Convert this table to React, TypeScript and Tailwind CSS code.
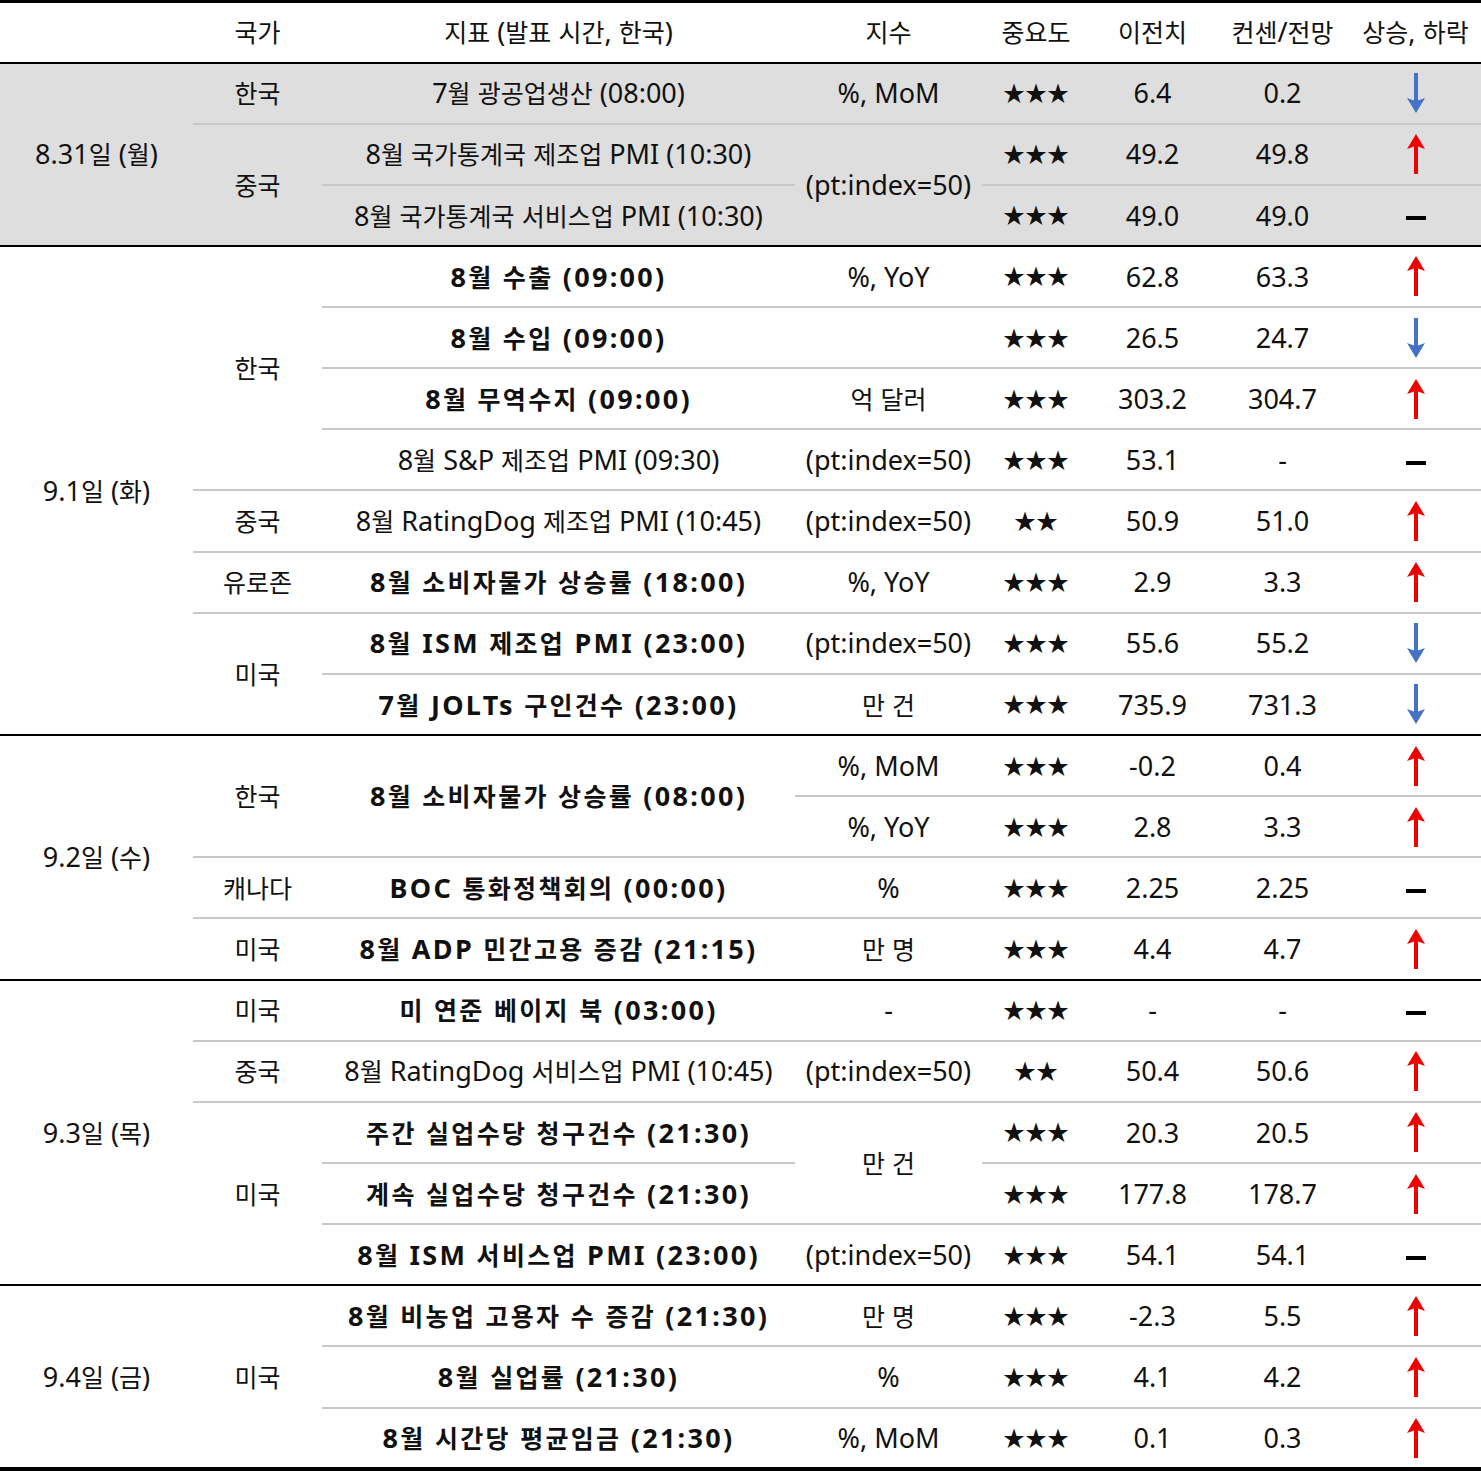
import type { ReactNode } from "react";

type Trend = "up" | "down" | "flat";

type Row = {
  first?: boolean;
  date?: [string, number];
  country?: [string, number];
  ind?: [string, number, boolean];
  idx?: [string, number];
  stars: number;
  prev: string;
  cons: string;
  trend: Trend;
};

type Group = { shaded?: boolean; rows: Row[] };

const groups: Group[] = [
  {
    shaded: true,
    rows: [
      { first: true, date: ["8.31일 (월)", 3], country: ["한국", 1], ind: ["7월 광공업생산 (08:00)", 1, false], idx: ["%, MoM", 1], stars: 3, prev: "6.4", cons: "0.2", trend: "down" },
      { country: ["중국", 2], ind: ["8월 국가통계국 제조업 PMI (10:30)", 1, false], idx: ["(pt:index=50)", 2], stars: 3, prev: "49.2", cons: "49.8", trend: "up" },
      { ind: ["8월 국가통계국 서비스업 PMI (10:30)", 1, false], stars: 3, prev: "49.0", cons: "49.0", trend: "flat" },
    ],
  },
  {
    rows: [
      { first: true, date: ["9.1일 (화)", 8], country: ["한국", 4], ind: ["8월 수출 (09:00)", 1, true], idx: ["%, YoY", 1], stars: 3, prev: "62.8", cons: "63.3", trend: "up" },
      { ind: ["8월 수입 (09:00)", 1, true], idx: ["", 1], stars: 3, prev: "26.5", cons: "24.7", trend: "down" },
      { ind: ["8월 무역수지 (09:00)", 1, true], idx: ["억 달러", 1], stars: 3, prev: "303.2", cons: "304.7", trend: "up" },
      { ind: ["8월 S&P 제조업 PMI (09:30)", 1, false], idx: ["(pt:index=50)", 1], stars: 3, prev: "53.1", cons: "-", trend: "flat" },
      { country: ["중국", 1], ind: ["8월 RatingDog 제조업 PMI (10:45)", 1, false], idx: ["(pt:index=50)", 1], stars: 2, prev: "50.9", cons: "51.0", trend: "up" },
      { country: ["유로존", 1], ind: ["8월 소비자물가 상승률 (18:00)", 1, true], idx: ["%, YoY", 1], stars: 3, prev: "2.9", cons: "3.3", trend: "up" },
      { country: ["미국", 2], ind: ["8월 ISM 제조업 PMI (23:00)", 1, true], idx: ["(pt:index=50)", 1], stars: 3, prev: "55.6", cons: "55.2", trend: "down" },
      { ind: ["7월 JOLTs 구인건수 (23:00)", 1, true], idx: ["만 건", 1], stars: 3, prev: "735.9", cons: "731.3", trend: "down" },
    ],
  },
  {
    rows: [
      { first: true, date: ["9.2일 (수)", 4], country: ["한국", 2], ind: ["8월 소비자물가 상승률 (08:00)", 2, true], idx: ["%, MoM", 1], stars: 3, prev: "-0.2", cons: "0.4", trend: "up" },
      { idx: ["%, YoY", 1], stars: 3, prev: "2.8", cons: "3.3", trend: "up" },
      { country: ["캐나다", 1], ind: ["BOC 통화정책회의 (00:00)", 1, true], idx: ["%", 1], stars: 3, prev: "2.25", cons: "2.25", trend: "flat" },
      { country: ["미국", 1], ind: ["8월 ADP 민간고용 증감 (21:15)", 1, true], idx: ["만 명", 1], stars: 3, prev: "4.4", cons: "4.7", trend: "up" },
    ],
  },
  {
    rows: [
      { first: true, date: ["9.3일 (목)", 5], country: ["미국", 1], ind: ["미 연준 베이지 북 (03:00)", 1, true], idx: ["-", 1], stars: 3, prev: "-", cons: "-", trend: "flat" },
      { country: ["중국", 1], ind: ["8월 RatingDog 서비스업 PMI (10:45)", 1, false], idx: ["(pt:index=50)", 1], stars: 2, prev: "50.4", cons: "50.6", trend: "up" },
      { country: ["미국", 3], ind: ["주간 실업수당 청구건수 (21:30)", 1, true], idx: ["만 건", 2], stars: 3, prev: "20.3", cons: "20.5", trend: "up" },
      { ind: ["계속 실업수당 청구건수 (21:30)", 1, true], stars: 3, prev: "177.8", cons: "178.7", trend: "up" },
      { ind: ["8월 ISM 서비스업 PMI (23:00)", 1, true], idx: ["(pt:index=50)", 1], stars: 3, prev: "54.1", cons: "54.1", trend: "flat" },
    ],
  },
  {
    rows: [
      { first: true, date: ["9.4일 (금)", 3], country: ["미국", 3], ind: ["8월 비농업 고용자 수 증감 (21:30)", 1, true], idx: ["만 명", 1], stars: 3, prev: "-2.3", cons: "5.5", trend: "up" },
      { ind: ["8월 실업률 (21:30)", 1, true], idx: ["%", 1], stars: 3, prev: "4.1", cons: "4.2", trend: "up" },
      { ind: ["8월 시간당 평균임금 (21:30)", 1, true], idx: ["%, MoM", 1], stars: 3, prev: "0.1", cons: "0.3", trend: "up" },
    ],
  },
];

// hangul runs are set a touch smaller than the latin/digit runs, like the source font
const HANGUL = /([\u1100-\u11ff\u3130-\u318f\uac00-\ud7af]+)/;

function K({ s }: { s: string }) {
  return (
    <>
      {s.split(HANGUL).map((part, i) =>
        part === "" ? null : HANGUL.test(part) ? (
          <span key={i} className="text-[25px]">
            {part}
          </span>
        ) : (
          <span key={i}>{part}</span>
        )
      )}
    </>
  );
}

function TrendMark({ t }: { t: Trend }) {
  if (t === "flat") return <span className="inline-block w-[20px] h-[4px] bg-black align-middle" />;
  if (t === "up")
    return (
      <svg width="18" height="40" viewBox="0 0 18 40" className="inline-block align-middle">
        <path d="M9 0 L18 15 L11 12.5 L11 40 L7 40 L7 12.5 L0 15 Z" fill="#f00000" />
      </svg>
    );
  return (
    <svg width="18" height="40" viewBox="0 0 18 40" className="inline-block align-middle">
      <path d="M9 40 L18 25 L11 27.5 L11 0 L7 0 L7 27.5 L0 25 Z" fill="#4472c4" />
    </svg>
  );
}

function Td({ first, span, className, children }: { first?: boolean; span?: number; className?: string; children?: ReactNode }) {
  return (
    <td
      rowSpan={span && span > 1 ? span : undefined}
      className={`p-0 text-center align-middle whitespace-nowrap leading-[1.1] border-t-2 ${first ? "border-t-black" : "border-t-[#c8c8c8]"} ${className ?? ""}`}
    >
      {children}
    </td>
  );
}

const heads = ["", "국가", "지표 (발표 시간, 한국)", "지수", "중요도", "이전치", "컨센/전망", "상승, 하락"];

export default function App() {
  return (
    <div className="w-[1481px] bg-white font-['Noto_Sans','Noto_Sans_CJK_KR',sans-serif] text-[27px] text-[#111]">
      <table className="w-[1481px] table-fixed border-collapse border-t-[3px] border-b-4 border-black">
        <colgroup>
          <col className="w-[193px]" />
          <col className="w-[129px]" />
          <col className="w-[473px]" />
          <col className="w-[187px]" />
          <col className="w-[108px]" />
          <col className="w-[125px]" />
          <col className="w-[135px]" />
          <col className="w-[131px]" />
        </colgroup>
        <thead>
          <tr className="h-[61px]">
            {heads.map((h, i) => (
              <th key={i} className="p-0 font-normal leading-[1.1] whitespace-nowrap">
                <K s={h} />
              </th>
            ))}
          </tr>
        </thead>
        {groups.map((g, gi) => (
          <tbody key={gi} className={g.shaded ? "bg-[#dedede]" : ""}>
            {g.rows.map((r, ri) => (
              <tr key={ri} className="h-[61.15px]">
                {r.date && (
                  <Td first span={r.date[1]}>
                    <K s={r.date[0]} />
                  </Td>
                )}
                {r.country && (
                  <Td first={r.first} span={r.country[1]}>
                    <K s={r.country[0]} />
                  </Td>
                )}
                {r.ind && (
                  <Td first={r.first} span={r.ind[1]} className={r.ind[2] ? "font-bold tracking-[2.3px]" : ""}>
                    <K s={r.ind[0]} />
                  </Td>
                )}
                {r.idx && (
                  <Td first={r.first} span={r.idx[1]}>
                    <K s={r.idx[0]} />
                  </Td>
                )}
                <Td first={r.first} className="font-['Noto_Sans_CJK_KR',sans-serif] text-[22px] leading-none pb-[4px]">
                  {"★".repeat(r.stars)}
                </Td>
                <Td first={r.first}>{r.prev}</Td>
                <Td first={r.first}>{r.cons}</Td>
                <Td first={r.first}>
                  <TrendMark t={r.trend} />
                </Td>
              </tr>
            ))}
          </tbody>
        ))}
      </table>
    </div>
  );
}
